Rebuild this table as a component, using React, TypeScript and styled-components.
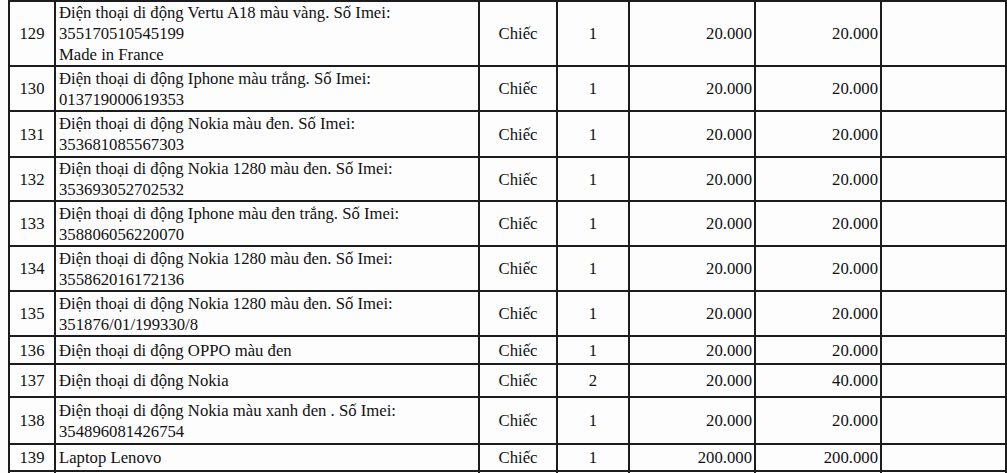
import React from 'react';
import styled, { createGlobalStyle } from 'styled-components';

const GlobalStyle = createGlobalStyle`
  html, body {
    margin: 0;
    padding: 0;
    background: #fdfdfd;
  }
  body {
    font-family: "Liberation Serif", "Times New Roman", serif;
    color: #111;
    overflow: hidden;
  }
`;

const Sheet = styled.div`
  margin-left: 8px;
  width: 997px;
  display: grid;
  grid-template-columns: 46px 424px 78px 72px 126px 126px 125px;
  border-top: 2px solid #1c1c1c;
  border-left: 2px solid #1c1c1c;
  font-family: "Liberation Serif", "Times New Roman", serif;
  font-size: 16.7px;
  line-height: 21px;
`;

const Cell = styled.div<{ $align?: 'left' | 'center' | 'right'; $h: number }>`
  height: ${p => p.$h}px;
  box-sizing: border-box;
  border-right: 2px solid #1c1c1c;
  border-bottom: 2px solid #1c1c1c;
  display: flex;
  flex-direction: column;
  justify-content: center;
  align-items: ${p =>
    p.$align === 'right' ? 'flex-end' : p.$align === 'center' ? 'center' : 'flex-start'};
  padding: 0 ${p => (p.$align === 'right' ? '2px' : '0')} 0 ${p => (p.$align === 'left' ? '3px' : '0')};
  white-space: nowrap;
`;

const Line = styled.span`
  display: block;
`;

interface Item {
  no: string;
  desc: string[];
  unit: string;
  qty: string;
  price: string;
  total: string;
  h: number;
}

const items: Item[] = [
  { no: '129', desc: ['Điện thoại di động Vertu A18 màu vàng. Số Imei:', '355170510545199', 'Made in France'], unit: 'Chiếc', qty: '1', price: '20.000', total: '20.000', h: 65 },
  { no: '130', desc: ['Điện thoại di động Iphone màu trắng. Số Imei:', '013719000619353'], unit: 'Chiếc', qty: '1', price: '20.000', total: '20.000', h: 45 },
  { no: '131', desc: ['Điện thoại di động Nokia màu đen. Số Imei:', '353681085567303'], unit: 'Chiếc', qty: '1', price: '20.000', total: '20.000', h: 46 },
  { no: '132', desc: ['Điện thoại di động Nokia 1280 màu đen. Số Imei:', '353693052702532'], unit: 'Chiếc', qty: '1', price: '20.000', total: '20.000', h: 44 },
  { no: '133', desc: ['Điện thoại di động Iphone màu đen trắng. Số Imei:', '358806056220070'], unit: 'Chiếc', qty: '1', price: '20.000', total: '20.000', h: 45 },
  { no: '134', desc: ['Điện thoại di động Nokia 1280 màu đen. Số Imei:', '355862016172136'], unit: 'Chiếc', qty: '1', price: '20.000', total: '20.000', h: 45 },
  { no: '135', desc: ['Điện thoại di động Nokia 1280 màu đen. Số Imei:', '351876/01/199330/8'], unit: 'Chiếc', qty: '1', price: '20.000', total: '20.000', h: 45 },
  { no: '136', desc: ['Điện thoại di động OPPO màu đen'], unit: 'Chiếc', qty: '1', price: '20.000', total: '20.000', h: 28 },
  { no: '137', desc: ['Điện thoại di động Nokia'], unit: 'Chiếc', qty: '2', price: '20.000', total: '40.000', h: 33 },
  { no: '138', desc: ['Điện thoại di động Nokia màu xanh đen . Số Imei:', '354896081426754'], unit: 'Chiếc', qty: '1', price: '20.000', total: '20.000', h: 47 },
  { no: '139', desc: ['Laptop Lenovo'], unit: 'Chiếc', qty: '1', price: '200.000', total: '200.000', h: 27 },
  { no: '', desc: [''], unit: '', qty: '', price: '', total: '', h: 30 },
];

export default function App() {
  return (
    <>
      <GlobalStyle />
      <Sheet>
        {items.map((it, i) => (
          <React.Fragment key={i}>
            <Cell $align="center" $h={it.h}>{it.no}</Cell>
            <Cell $align="left" $h={it.h}>
              {it.desc.map((l, j) => (
                <Line key={j}>{l}</Line>
              ))}
            </Cell>
            <Cell $align="center" $h={it.h}>{it.unit}</Cell>
            <Cell $align="center" $h={it.h}>{it.qty}</Cell>
            <Cell $align="right" $h={it.h}>{it.price}</Cell>
            <Cell $align="right" $h={it.h}>{it.total}</Cell>
            <Cell $h={it.h} />
          </React.Fragment>
        ))}
      </Sheet>
    </>
  );
}
